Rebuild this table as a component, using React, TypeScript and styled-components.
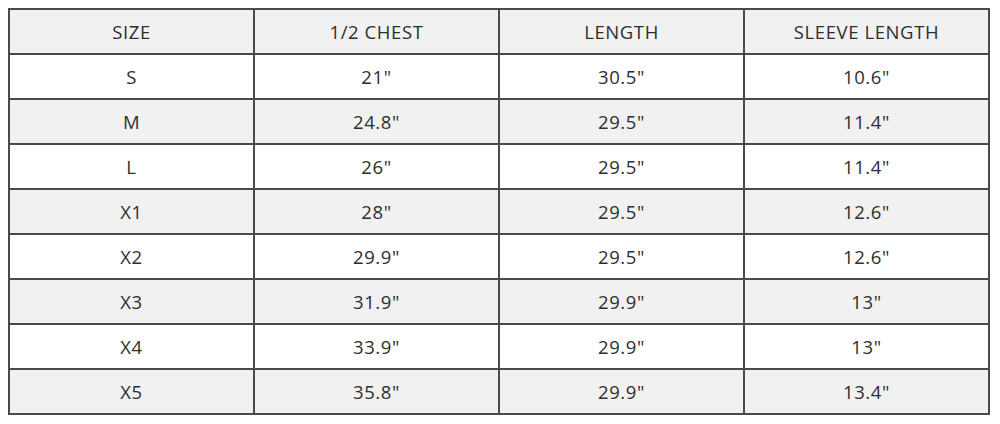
import React from "react";
import styled, { createGlobalStyle } from "styled-components";

const Global = createGlobalStyle`
  html, body { margin: 0; padding: 0; background: #ffffff; }
  body { font-family: "Open Sans", Lato, sans-serif; }
`;

const Page = styled.div`
  padding: 8px 10px 10px 8px;
`;

const Table = styled.table`
  width: 982px;
  border-collapse: collapse;
  table-layout: fixed;
  border: 2px solid #4a4a4a;
  color: #2e2e2e;
  font-size: 18.5px;
  font-weight: 500;
`;

const Row = styled.tr<{ $shade: boolean }>`
  height: 45px;
  background: ${(p) => (p.$shade ? "#f1f1f1" : "#ffffff")};
`;

const Cell = styled.td`
  border: 2px solid #4a4a4a;
  text-align: center;
  vertical-align: middle;
  padding: 0 0 1px;
  letter-spacing: 0.6px;
`;

const HeadCell = styled.th`
  border: 2px solid #4a4a4a;
  text-align: center;
  vertical-align: middle;
  font-weight: 500;
  padding: 0 0 1px;
  letter-spacing: 0.6px;
`;

const headers = ["SIZE", "1/2 CHEST", "LENGTH", "SLEEVE LENGTH"];
const rows = [
  ["S", '21"', '30.5"', '10.6"'],
  ["M", '24.8"', '29.5"', '11.4"'],
  ["L", '26"', '29.5"', '11.4"'],
  ["X1", '28"', '29.5"', '12.6"'],
  ["X2", '29.9"', '29.5"', '12.6"'],
  ["X3", '31.9"', '29.9"', '13"'],
  ["X4", '33.9"', '29.9"', '13"'],
  ["X5", '35.8"', '29.9"', '13.4"'],
];

export default function App() {
  return (
    <>
      <Global />
      <Page>
        <Table>
          <thead>
            <Row $shade>
              {headers.map((h) => (
                <HeadCell key={h}>{h}</HeadCell>
              ))}
            </Row>
          </thead>
          <tbody>
            {rows.map((r, i) => (
              <Row key={r[0]} $shade={i % 2 === 1}>
                {r.map((c, j) => (
                  <Cell key={j}>{c}</Cell>
                ))}
              </Row>
            ))}
          </tbody>
        </Table>
      </Page>
    </>
  );
}
